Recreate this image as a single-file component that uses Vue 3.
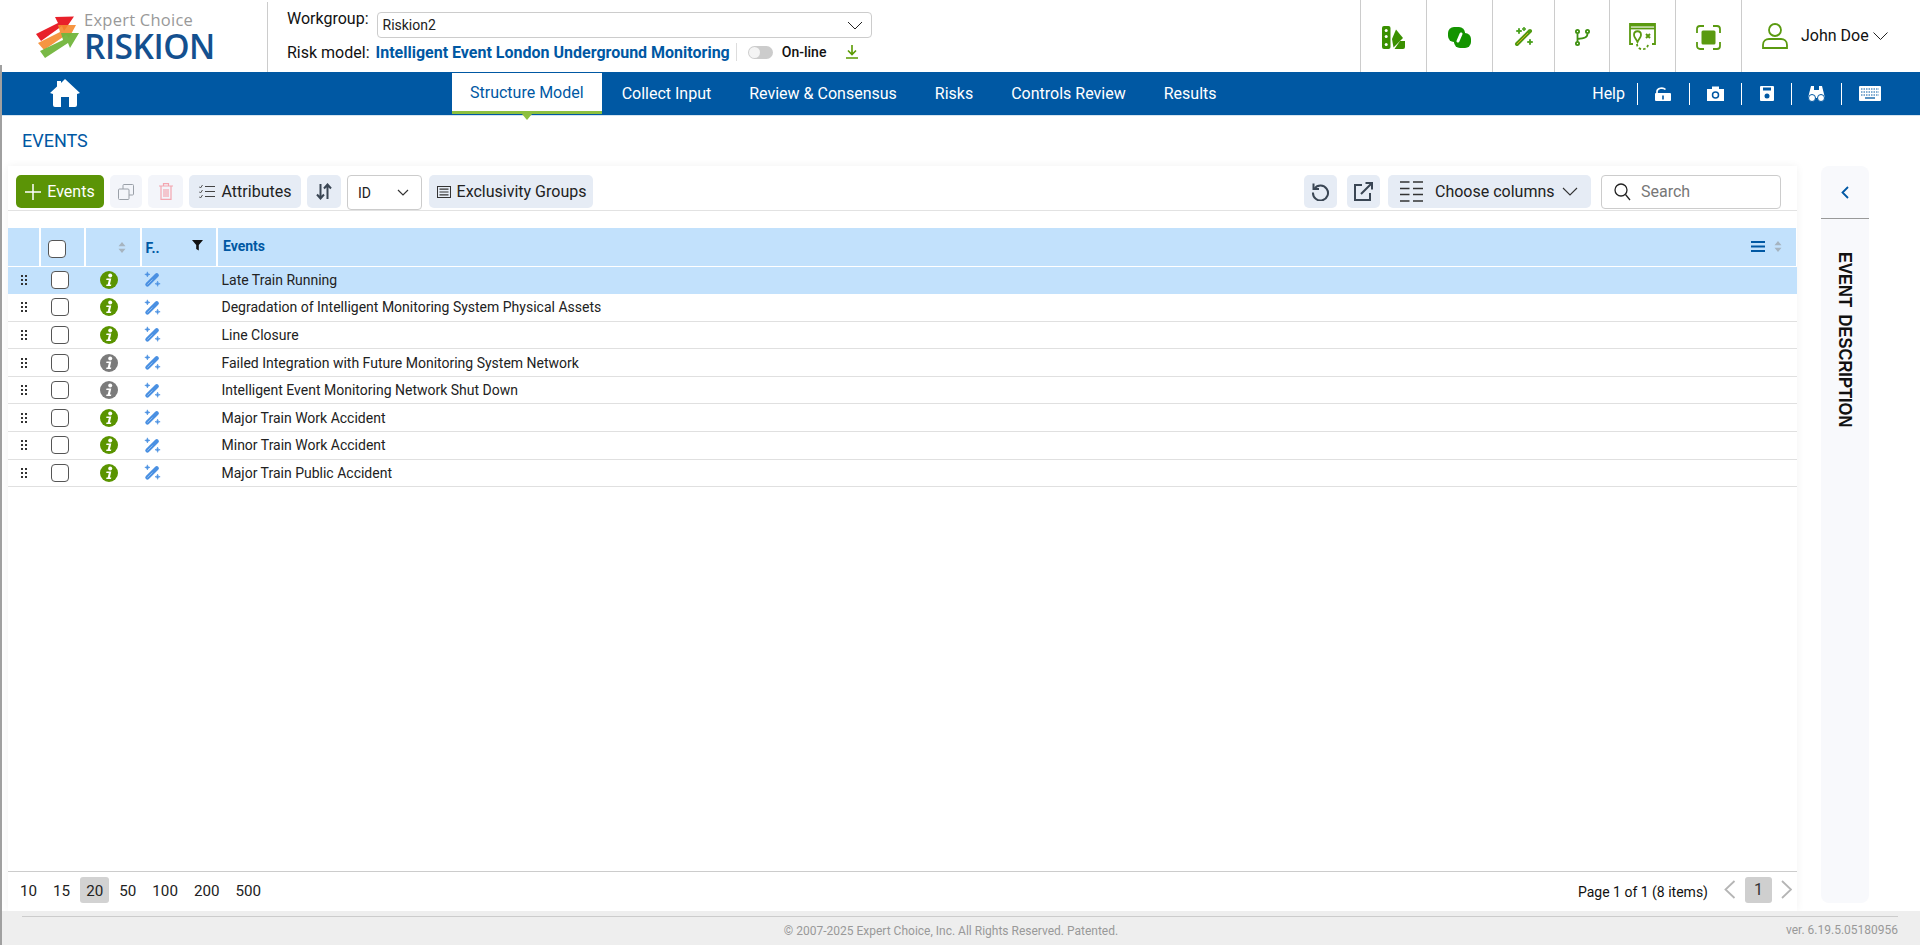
<script setup>
const rows = [
  { name: 'Late Train Running', on: true, sel: true },
  { name: 'Degradation of Intelligent Monitoring System Physical Assets', on: true },
  { name: 'Line Closure', on: true },
  { name: 'Failed Integration with Future Monitoring System Network', on: false },
  { name: 'Intelligent Event Monitoring Network Shut Down', on: false },
  { name: 'Major Train Work Accident', on: true },
  { name: 'Minor Train Work Accident', on: true },
  { name: 'Major Train Public Accident', on: true },
]
const tabs = ['Structure Model', 'Collect Input', 'Review & Consensus', 'Risks', 'Controls Review', 'Results']
const sizes = [10, 15, 20, 50, 100, 200, 500]
</script>

<template>
  <div class="page">
    <header class="top">
      <div class="logo">
        <svg class="arrows" width="44" height="44" viewBox="0 0 44 44">
          <path d="M1 18 L23 7 L20 1 L39 0.5 L29 15 L27 10 L6 25 Z" fill="#e8202a"/>
          <path d="M3 27 L25 16 L23 9 L41 9 L34 22 L31 19 L9 34 Z" fill="#f58a2e" opacity=".9"/>
          <path d="M5 35 L28 24 L26 17 L44 17 L35 32 L33 27 L10 42 Z" fill="#72b53c" opacity=".95"/>
        </svg>
        <div class="logo-text">
          <div class="ec">Expert Choice</div>
          <div class="rk">RISKION</div>
        </div>
      </div>
      <div class="model">
        <div class="m-row1">
          <span class="lbl">Workgroup:</span>
          <div class="wg">
            <span>Riskion2</span>
            <svg width="16" height="9" viewBox="0 0 16 9"><path d="M1 1l7 7 7-7" fill="none" stroke="#222" stroke-width="1"/></svg>
          </div>
        </div>
        <div class="m-row2">
          <span class="lbl">Risk model:</span>
          <a class="mname">Intelligent Event London Underground Monitoring</a>
          <span class="vsep"></span>
          <span class="toggle"><i></i></span>
          <span class="online">On-line</span>
          <svg class="dl" width="14" height="14" viewBox="0 0 14 14"><path d="M7 0v9M3 5.500L7 9.500l4-4M1 13h12" fill="none" stroke="#5a9a00" stroke-width="1.600"/></svg>
        </div>
      </div>
      <div class="tools">
        <div class="tool w66">
          <svg width="23" height="23" viewBox="0 0 23 23"><rect width="8.500" height="23" rx="2" fill="#3a9000"/><circle cx="4.200" cy="4.500" r="1.500" fill="#fff"/><circle cx="4.200" cy="10.500" r="1.500" fill="#fff"/><circle cx="4.200" cy="18.500" r="1.500" fill="#fff"/><path d="M10 13 L14 3.500 L21 12 L11.500 21.500 Z" fill="#3a9000"/><path d="M12.500 23 L18 15 H23 V21 Q23 23 21 23 Z" fill="#3a9000"/></svg>
        </div>
        <div class="tool w66">
          <svg width="23" height="23" viewBox="0 0 23 23"><rect x="0" y="1" width="17" height="15" rx="6" fill="#149400"/><rect x="6" y="7" width="17" height="15" rx="6" fill="#149400"/><path d="M6 6h11v11H6z" fill="#149400"/><path d="M13 8l-3 7" stroke="#fff" stroke-width="3" stroke-linecap="round"/></svg>
        </div>
        <div class="tool w61">
          <svg width="20" height="20" viewBox="0 0 20 20"><path d="M3 17L16 4" stroke="#4f9a10" stroke-width="4" stroke-linecap="round"/><path d="M3 17L14 6" stroke="#d9a91a" stroke-width="1"/><path d="M5 1Q5 4 8 4Q5 4 5 7Q5 4 2 4Q5 4 5 1Z M16 12Q16 15 19 15Q16 15 16 18Q16 15 13 15Q16 15 16 12Z M10 0Q10 2 12 2Q10 2 10 4Q10 2 8 2Q10 2 10 0Z" fill="#3e9a10" stroke="#3e9a10" stroke-width=".8"/></svg>
        </div>
        <div class="tool w55">
          <svg width="15" height="17" viewBox="0 0 15 17"><g fill="none" stroke="#3e9010" stroke-width="1.800"><circle cx="2.500" cy="2.500" r="1.600"/><circle cx="12.500" cy="2.500" r="1.600"/><circle cx="2.500" cy="14.500" r="1.600"/><path d="M2.500 4.500v8M12.500 4.500c0 4-3 5-10 5.500"/></g></svg>
        </div>
        <div class="tool w67">
          <svg width="27" height="29" viewBox="0 0 27 29"><g fill="none" stroke="#5a9a10" stroke-width="1.800"><path d="M4 21H1V1h25v20h-3"/><path d="M1 5.500h25"/><path d="M9 12c0-5 7-5 7 0 0 2-2 4-3.500 7C11 16 9 14 9 12z" transform="translate(-4 0)"/><path d="M17 11l4 4M21 11l-4 4" stroke-width="2"/><path d="M8 21c0 7 11 7 11 0" stroke-dasharray="2.500 2"/></g><path d="M1 1h25v2.500H1z" fill="#5a9a10"/></svg>
        </div>
        <div class="tool w67">
          <svg width="25" height="25" viewBox="0 0 25 25"><path d="M1 8V4a3 3 0 0 1 3-3h4M17 1h4a3 3 0 0 1 3 3v4M24 17v4a3 3 0 0 1-3 3h-4M8 24H4a3 3 0 0 1-3-3v-4" fill="none" stroke="#5a9a10" stroke-width="1.800"/><rect x="5.500" y="5.500" width="14" height="14" rx="1.500" fill="#5a9a10"/></svg>
        </div>
        <div class="user">
          <svg width="26" height="26" viewBox="0 0 26 26"><g fill="none" stroke="#5a9a10" stroke-width="1.800"><circle cx="13" cy="7" r="6"/><path d="M1 25v-3c0-4 3-6 6-6h12c3 0 6 2 6 6v3z"/></g></svg>
          <span class="uname">John Doe</span>
          <svg width="15" height="8" viewBox="0 0 15 8"><path d="M.5.500l7 7 7-7" fill="none" stroke="#222"/></svg>
        </div>
      </div>
    </header>

    <nav class="nav">
      <div class="home">
        <svg width="30" height="28" viewBox="0 0 30 28"><path d="M15 0 L30 14 L27 15 L27 26 a2 2 0 0 1-2 2 H19 V18 H11 V28 H5 a2 2 0 0 1-2-2 V15 L0 14 L7 7.500 V2 H11 V4 Z" fill="#fff"/></svg>
      </div>
      <div class="tabs">
        <a v-for="(t, i) in tabs" :key="t" class="tab" :class="{ active: i === 0 }">{{ t }}</a>
      </div>
      <div class="nav-right">
        <span class="help">Help</span>
        <span class="ni n1">
          <svg width="17" height="14" viewBox="0 0 17 14"><path d="M2 6V4.500C2 1 8 0 10.500 2.500" fill="none" stroke="#fff" stroke-width="1.700"/><rect x="0" y="6" width="16" height="8" rx="1" fill="#fff"/><rect x="7.200" y="8.500" width="1.600" height="4" fill="#0058a3"/></svg>
        </span>
        <span class="ni n1">
          <svg width="17" height="15" viewBox="0 0 17 15"><path d="M0 3h5V0.500h7V3h5v12H0z" fill="#fff"/><circle cx="8.500" cy="9" r="3" fill="none" stroke="#0058a3" stroke-width="1.500"/></svg>
        </span>
        <span class="ni n2">
          <svg width="14" height="15" viewBox="0 0 14 15"><path d="M1 0h12a1 1 0 0 1 1 1v13a1 1 0 0 1-1 1H1a1 1 0 0 1-1-1V1a1 1 0 0 1 1-1z" fill="#fff"/><rect x="3" y="1.500" width="8" height="3" fill="#0058a3"/><circle cx="7" cy="10" r="2.500" fill="#0058a3"/></svg>
        </span>
        <span class="ni n2">
          <svg width="17" height="16" viewBox="0 0 17 16"><path d="M3 0h3v4h5V0h3l3 12H0z" fill="#fff"/><circle cx="4" cy="12" r="3.500" fill="#fff" stroke="#0058a3" stroke-width="1"/><circle cx="13" cy="12" r="3.500" fill="#fff" stroke="#0058a3" stroke-width="1"/></svg>
        </span>
        <span class="ni last">
          <svg width="22" height="15" viewBox="0 0 22 15"><rect width="22" height="15" rx="1" fill="#fff"/><path d="M2 3h18M2 6h18M2 9h18" stroke="#0058a3" stroke-dasharray="1.500 1" fill="none"/><path d="M6 12h10" stroke="#0058a3" stroke-width="1.300"/></svg>
        </span>
      </div>
    </nav>

    <div class="title">EVENTS</div>

    <main class="main">
      <section class="panel">
        <div class="toolbar">
          <button class="btn green">
            <svg width="16" height="16" viewBox="0 0 16 16"><path d="M8 0v16M0 8h16" stroke="#fff" stroke-width="1.500"/></svg>
            <span>Events</span>
          </button>
          <button class="btn off w32">
            <svg width="16" height="16" viewBox="0 0 16 16"><g fill="none" stroke="#9aa0a8" stroke-width="1"><rect x=".5" y="5" width="10.500" height="10.500" rx="1"/><path d="M5 5V1.500a1 1 0 0 1 1-1h8.500a1 1 0 0 1 1 1V10a1 1 0 0 1-1 1H11"/></g></svg>
          </button>
          <button class="btn off w36">
            <svg width="14" height="17" viewBox="0 0 14 17"><g fill="none" stroke="#f3a6b0" stroke-width="1.200"><path d="M0 3h14M4.500 3V.7h5V3M2 3v13.300h10V3M5 6v8M7 6v8M9 6v8"/></g></svg>
          </button>
          <button class="btn w112">
            <svg width="16" height="15" viewBox="0 0 16 15"><g fill="none" stroke="#444" stroke-width="1.100"><path d="M6 2.500h10M6 7.500h10M6 12.500h10"/><path d="M0 2.500l1.500 1.500L3.500 1M0 7.500L1.500 9l2-3M0 12.500L1.500 14l2-3" stroke-width=".9"/></g></svg>
            <span>Attributes</span>
          </button>
          <button class="btn w34">
            <svg width="16" height="17" viewBox="0 0 16 17"><g fill="none" stroke="#3a4654" stroke-width="2"><path d="M4.500 1v14M1 11.500L4.500 15.500 8 11.500M11.500 16V2M8 5.500L11.500 1.500 15 5.500"/></g></svg>
          </button>
          <div class="idsel">
            <span>ID</span>
            <svg width="12" height="7" viewBox="0 0 12 7"><path d="M1 1l5 5 5-5" fill="none" stroke="#333" stroke-width="1.200"/></svg>
          </div>
          <button class="btn w164">
            <svg width="14" height="12" viewBox="0 0 14 12"><rect x=".5" y=".5" width="13" height="11" fill="none" stroke="#333"/><path d="M2.500 3.200h9M2.500 6h9M2.500 8.800h9" stroke="#333" stroke-width="1.200"/></svg>
            <span>Exclusivity Groups</span>
          </button>
          <div class="spacer"></div>
          <button class="btn w33">
            <svg width="19" height="19" viewBox="0 0 19 19"><g fill="none" stroke="#3a4654" stroke-width="2"><path d="M3.500 6.500A7.500 7.500 0 1 1 2 10.500"/><path d="M2.500 1.500v5.500h5.500"/></g></svg>
          </button>
          <button class="btn w33 open">
            <svg width="19" height="19" viewBox="0 0 19 19"><g fill="none" stroke="#3a4654" stroke-width="2"><path d="M8 3H1v15h15v-7"/><path d="M7 12L18 1M11.500 1H18v6.500"/></g></svg>
          </button>
          <button class="btn w203">
            <svg width="23" height="21" viewBox="0 0 23 21"><path d="M0 1h9.500M13 1h10M0 7.500h9.500M13 7.500h10M0 13.500h9.500M13 13.500h10M0 20h9.500M13 20h10" stroke="#333" stroke-width="1.300"/></svg>
            <span class="cc">Choose columns</span>
            <svg width="16" height="9" viewBox="0 0 16 9"><path d="M1 1l7 7 7-7" fill="none" stroke="#333" stroke-width="1.100"/></svg>
          </button>
          <div class="search">
            <svg width="17" height="18" viewBox="0 0 17 18"><circle cx="7" cy="7" r="6" fill="none" stroke="#222" stroke-width="1.300"/><path d="M11.500 11.500L16 17" stroke="#222" stroke-width="1.300"/></svg>
            <span>Search</span>
          </div>
        </div>

        <div class="grid-wrap">
          <div class="thead">
            <div class="th"></div>
            <div class="th th-check"><span class="cb"></span></div>
            <div class="th th-info">
              <svg class="sort" width="8" height="11" viewBox="0 0 8 11"><path d="M4 0l3.500 4.200h-7zM4 11L.5 6.800h7z" fill="#a6b4c0"/></svg>
            </div>
            <div class="th th-f">
              <span class="f">F..</span>
              <svg class="funnel" width="11" height="11" viewBox="0 0 11 11"><path d="M0 0h11L6.800 5v5.500L4.200 9V5z" fill="#111"/></svg>
            </div>
            <div class="th th-ev">
              <span class="evt">Events</span>
              <svg width="14" height="11" viewBox="0 0 14 11"><path d="M0 1h14M0 5.500h14M0 10h14" stroke="#0058a3" stroke-width="1.800"/></svg>
              <svg class="sort2" width="8" height="11" viewBox="0 0 8 11"><path d="M4 0l3.500 4.200h-7zM4 11L.5 6.800h7z" fill="#a6b4c0"/></svg>
            </div>
          </div>
          <div v-for="r in rows" :key="r.name" class="tr" :class="{ sel: r.sel }">
            <div class="c-drag">
              <svg width="6" height="10" viewBox="0 0 6 10"><g fill="#333"><rect x="0" y="0" width="2" height="2"/><rect x="4" y="0" width="2" height="2"/><rect x="0" y="4" width="2" height="2"/><rect x="4" y="4" width="2" height="2"/><rect x="0" y="8" width="2" height="2"/><rect x="4" y="8" width="2" height="2"/></g></svg>
            </div>
            <div class="c-check"><span class="cb"></span></div>
            <div class="c-info">
              <svg width="18" height="18" viewBox="0 0 18 18"><circle cx="9" cy="9" r="9" :fill="r.on ? '#5a9400' : '#7b7b7b'"/><circle cx="10.200" cy="4.600" r="2" fill="#fff"/><path d="M6.500 7.600h4.800l-1.400 6h1.400l-.3 1.400H6.200l.3-1.400h1.200L8.800 9H6.200z" fill="#fff"/></svg>
            </div>
            <div class="c-wand">
              <svg width="17" height="17" viewBox="0 0 20 20"><path d="M4 16L15 5" stroke="#4a90e2" stroke-width="5" stroke-linecap="round"/><path d="M10 10l-6 6" stroke="#9cc4f0" stroke-width="1"/><path d="M4 1Q4 4 7 4Q4 4 4 7Q4 4 1 4Q4 4 4 1Z M16 12Q16 15 19 15Q16 15 16 18Q16 15 13 15Q16 15 16 12Z" fill="#4a90e2" stroke="#4a90e2" stroke-width=".8"/></svg>
            </div>
            <div class="c-name">{{ r.name }}</div>
          </div>
        </div>

        <div class="pager">
          <div class="sizes">
            <span v-for="s in sizes" :key="s" class="sz" :class="{ cur: s === 20 }">{{ s }}</span>
          </div>
          <div class="pinfo">Page 1 of 1 (8 items)</div>
          <svg class="pv" width="12" height="19" viewBox="0 0 12 19"><path d="M10.500 1L1.500 9.500l9 8.500" fill="none" stroke="#b5b5b5" stroke-width="1.800"/></svg>
          <span class="pg">1</span>
          <svg class="nx" width="11" height="19" viewBox="0 0 11 19"><path d="M1 1l9 8.500L1 18" fill="none" stroke="#b5b5b5" stroke-width="1.800"/></svg>
        </div>
      </section>

      <aside class="side">
        <div class="side-h">
          <svg width="8" height="13" viewBox="0 0 8 13"><path d="M7 1L1.500 6.500 7 12" fill="none" stroke="#0058a3" stroke-width="1.800"/></svg>
        </div>
        <div class="side-t">EVENT DESCRIPTION</div>
      </aside>
    </main>

    <footer class="foot">
      <div class="foot-in">
        <span class="copy">© 2007-2025 Expert Choice, Inc. All Rights Reserved. Patented.</span>
        <span class="ver">ver. 6.19.5.05180956</span>
      </div>
    </footer>
  </div>
</template>

<style>
html, body { margin: 0; padding: 0; background: #fff; overflow: hidden; }
</style>

<style scoped>
.page { width: 1920px; height: 945px; display: flex; flex-direction: column; font-family: Roboto, "Liberation Sans", sans-serif; color: #222; overflow: hidden; box-sizing: border-box; position: relative; }
.page::before { content: ""; position: absolute; left: 0; top: 65px; bottom: 0; width: 2px; background: #a0a0a0; z-index: 5; }
.top { height: 72px; display: flex; flex: none; background: #fff; }
.logo { width: 268px; flex: none; box-sizing: border-box; border-right: 1px solid #ccc; display: flex; padding: 14px 0 0 35px; margin-top: 2px; }
.arrows { display: block; flex: none; margin-right: 5px; }
.logo-text { display: flex; flex-direction: column; margin-top: -5px; }
.ec { font: 400 16.500px/18px "Open Sans", sans-serif; color: #999; letter-spacing: .25px; }
.rk { font: 600 33.500px/34px "Open Sans", sans-serif; color: #14508f; letter-spacing: -.5px; }
.model { padding-left: 19px; display: flex; flex-direction: column; width: 700px; flex: none; }
.m-row1 { display: flex; align-items: flex-start; height: 38px; padding-top: 10px; box-sizing: border-box; }
.lbl { font-size: 16px; line-height: 17px; color: #111; }
.wg { margin: 2px 0 0 8px; width: 495px; height: 26px; box-sizing: border-box; border: 1px solid #ccc; border-radius: 4px; display: flex; align-items: center; justify-content: space-between; padding: 0 8px 0 5px; font-size: 14px; }
.m-row2 { display: flex; align-items: center; height: 28px; }
.mname { font-size: 16px; font-weight: 700; color: #0058a3; margin-left: 6px; white-space: nowrap; }
.vsep { width: 1px; height: 18px; background: #ddd; margin: 0 11px 0 6px; }
.toggle { width: 25px; height: 13px; border-radius: 7px; background: #ccc; display: block; position: relative; }
.toggle i { position: absolute; left: 1px; top: 1px; width: 11px; height: 11px; border-radius: 50%; background: #f4f4f4; }
.online { font-size: 14px; font-weight: 500; margin-left: 9px; color: #111; }
.dl { margin-left: 19px; }
.tools { margin-left: auto; display: flex; width: 560px; flex: none; }
.tool { box-sizing: border-box; border-left: 1px solid #ccc; display: flex; align-items: center; justify-content: center; padding-top: 2px; }
.w66 { width: 66px; }
.w61 { width: 62px; }
.w55 { width: 55px; }
.w67 { width: 66px; }
.user { flex: 1; border-left: 1px solid #ccc; display: flex; align-items: center; padding-left: 20px; }
.uname { font-size: 16px; margin: 0 4px 2px 13px; color: #111; white-space: nowrap; }
.user > svg:last-child { margin-bottom: 1px; }

.nav { height: 43px; flex: none; background: #0058a3; display: flex; border-bottom: 1px solid #d5e4f0; box-sizing: content-box; }
.home { width: 452px; flex: none; box-sizing: border-box; padding: 7px 0 0 50px; }
.home svg { display: block; }
.tabs { display: flex; padding-top: 1px; }
.tab { color: #fff; font-size: 16px; font-weight: 400; padding: 0 19px; line-height: 41px; white-space: nowrap; position: relative; box-sizing: border-box; }
.tab.active { background: #fff; color: #0058a3; padding: 0 18px; margin-right: 1px; font-weight: 400; border-bottom: 3px solid #8dc03f; height: 41px; line-height: 39px; }
.tab.active::after { content: ""; position: absolute; left: 50%; top: 41px; margin-left: -5px; border: 5px solid transparent; border-top: 6px solid #8dc03f; border-bottom: 0; }
.nav-right { margin-left: auto; display: flex; align-items: center; padding-right: 39px; }
.help { color: #fff; font-size: 16px; font-weight: 400; padding-right: 12px; height: 22px; line-height: 22px; border-right: 1px solid #fff; }
.ni { display: flex; align-items: center; justify-content: center; height: 22px; border-right: 1px solid #fff; }
.n1 { width: 51px; }
.n2 { width: 49px; }
.ni.last { border-right: 0; padding-left: 17px; }
.ni svg { display: block; }

.title { height: 50px; flex: none; padding-left: 22px; font-size: 18px; line-height: 50px; color: #0058a3; box-sizing: border-box; }
.main { flex: 1; min-height: 0; display: flex; padding-left: 8px; }
.panel { width: 1789px; flex: none; display: flex; flex-direction: column; box-shadow: 0 0 8px rgba(0, 0, 0, .06); background: #fff; }
.toolbar { height: 45px; flex: none; box-sizing: border-box; border-bottom: 1px solid #e2e2e2; padding: 9px 16px 2px 8px; display: flex; gap: 6px; align-items: flex-start; }
.btn { height: 33px; border: 0; padding: 0; border-radius: 5px; background: #e6ecf5; display: flex; align-items: center; justify-content: center; font: 400 16px Roboto, sans-serif; color: #222; gap: 7px; box-sizing: border-box; flex: none; }
.green { width: 88px; background: #5b9406; color: #fff; font-weight: 400; font-size: 16px; gap: 6px; }
.off { background: #f3f5fa; }
.w32 { width: 32px; }
.w36 { width: 35px; }
.w112 { width: 112px; gap: 7px; }
.w34 { width: 34px; }
.w33 { width: 33px; }
.open { margin-left: 4px; }
.w164 { width: 164px; margin-left: 1px; gap: 6px; padding-left: 1px; }
.w203 { width: 203px; gap: 0; margin-left: 2px; justify-content: flex-start; padding-left: 12px; }
.cc { margin: 0 7px 0 12px; }
.idsel { width: 75px; height: 35px; box-sizing: border-box; border: 1px solid #ccc; border-radius: 4px; margin-left: 0; display: flex; align-items: center; justify-content: space-between; padding: 0 12px 0 10px; font-size: 14px; background: #fff; flex: none; }
.spacer { flex: 1; }
.search { width: 180px; height: 34px; box-sizing: border-box; border: 1px solid #ccc; border-radius: 4px; margin-left: 4px; display: flex; align-items: center; padding: 0 0 1px 12px; font-size: 16px; color: #777; gap: 10px; flex: none; }

.grid-wrap { flex: 1; min-height: 0; padding-top: 17px; box-sizing: border-box; }
.thead, .tr { display: grid; grid-template-columns: 31px 43px 53.500px 74.500px 1fr; column-gap: 2px; }
.thead { height: 38.500px; width: 1788px; box-sizing: border-box; border-bottom: .500px solid #fff; }
.th { background: #c2e1fc; position: relative; display: flex; align-items: center; }
.th-check { padding: 4px 0 0 7px; box-sizing: border-box; }
.sort { position: absolute; left: 32px; top: 14px; }
.f { font-size: 14px; font-weight: 700; color: #0058a3; position: absolute; left: 4px; top: 12px; line-height: 16px; }
.funnel { position: absolute; left: 50px; top: 12px; }
.th-ev { padding: 0 14px 0 5px; box-sizing: border-box; }
.evt { font-size: 14px; font-weight: 700; color: #0058a3; margin-right: auto; margin-bottom: 1px; }
.sort2 { margin-left: 9px; }
.tr { height: 27.600px; box-sizing: border-box; border-bottom: 1px solid #e0e0e0; align-items: center; font-size: 14px; color: #222; }
.tr.sel { background: #c2e1fc; border-bottom-color: #c2e1fc; }
.tr svg { display: block; }
.c-drag { padding-left: 13px; }
.c-check { padding-left: 10px; }
.cb { display: block; width: 18px; height: 18px; box-sizing: border-box; border: 1px solid #555; border-radius: 4px; background: #fff; }
.c-info { padding-left: 14px; }
.c-wand { padding-left: 2px; }
.c-name { padding-left: 3.500px; white-space: nowrap; }
.pager { height: 40px; flex: none; box-sizing: border-box; border-top: 1px solid #ccc; display: flex; align-items: flex-start; padding: 5px 5px 0 6px; }
.sizes { display: flex; gap: 4px; }
.sz { font-size: 15.200px; line-height: 29px; height: 26px; padding: 0 6px; border-radius: 3px; color: #222; }
.sz.cur { background: #d2d2d2; }
.pinfo { margin-left: auto; font-size: 14px; line-height: 30px; color: #111; }
.pv { margin: 3px 9px 0 16px; }
.pg { width: 27px; height: 26px; line-height: 26px; background: #cfcfcf; border-radius: 3px; text-align: center; font-size: 16px; color: #333; }
.nx { margin: 3px 0 0 9px; }

.side { width: 48px; flex: none; margin: 0 0 8px 24px; background: #f8f9fc; border-radius: 8px; display: flex; flex-direction: column; align-items: center; }
.side-h { height: 53px; width: 100%; box-sizing: border-box; border-bottom: 1px solid #999; display: flex; align-items: center; justify-content: center; }
.side-t { writing-mode: vertical-rl; font: 700 16.500px "Liberation Sans", sans-serif; word-spacing: 3px; color: #111; margin: 33px 0 0 1px; white-space: nowrap; transform: scaleX(1.15); }

.foot { height: 34px; flex: none; background: #eee; padding: 5px 22px 0 22px; box-sizing: border-box; }
.foot-in { border-top: 1px solid #ccc; position: relative; height: 28px; text-align: center; padding-right: 18px; box-sizing: border-box; }
.copy { font-size: 12px; line-height: 28px; color: #999; }
.ver { position: absolute; right: 0; top: 5px; font-size: 12px; color: #999; line-height: 16px; }
</style>
